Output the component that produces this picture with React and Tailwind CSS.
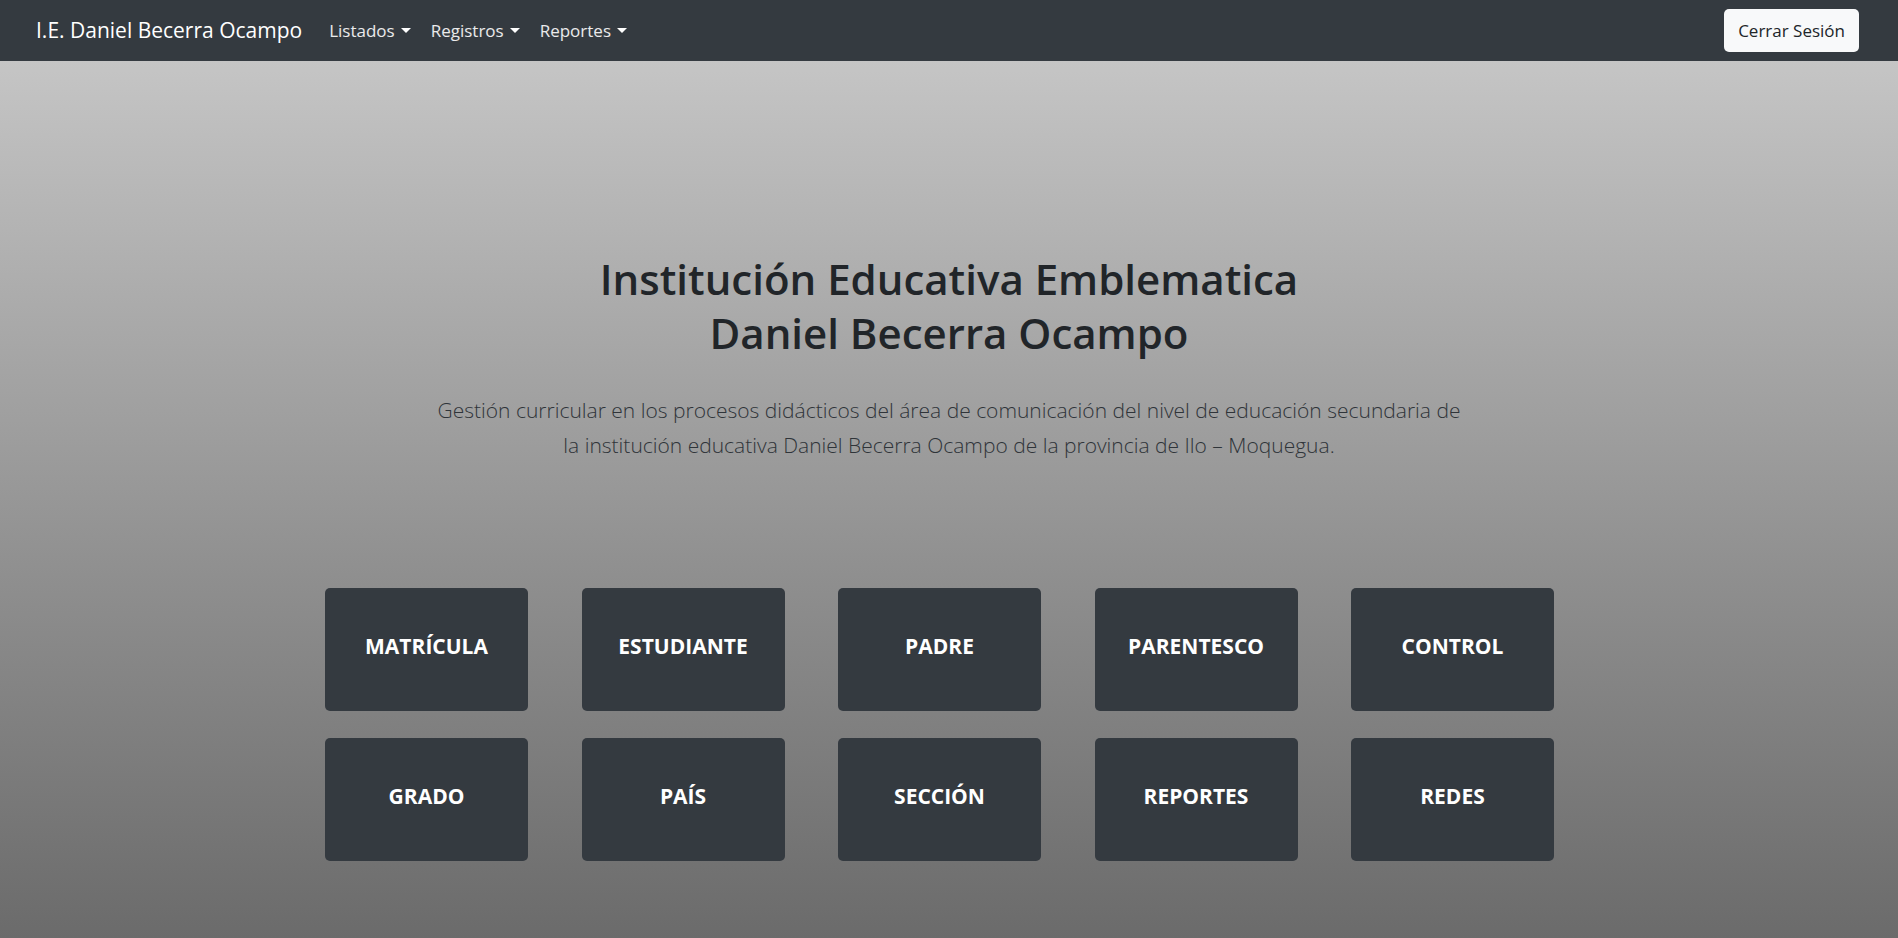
import React from 'react';

const menus = ['Listados', 'Registros', 'Reportes'];

const cards = [
  'MATRÍCULA',
  'ESTUDIANTE',
  'PADRE',
  'PARENTESCO',
  'CONTROL',
  'GRADO',
  'PAÍS',
  'SECCIÓN',
  'REPORTES',
  'REDES',
];

function Caret() {
  return (
    <span className="ml-[6px] inline-block h-0 w-0 border-x-[5px] border-t-[5px] border-x-transparent border-t-white align-middle" />
  );
}

export default function App() {
  return (
    <div className="min-h-screen flex flex-col font-['Open_Sans',sans-serif]">
      <nav className="h-[61px] bg-[#343a40] flex items-center justify-between pl-[36px] pr-[39px]">
        <div className="flex items-center">
          <a href="#" className="text-white text-[21px] mr-[17px]">
            I.E. Daniel Becerra Ocampo
          </a>
          {menus.map((m) => (
            <button key={m} className="text-white/90 text-[17px] px-[10px] flex items-center">
              {m}
              <Caret />
            </button>
          ))}
        </div>
        <button className="h-[43px] px-[14px] bg-[#f8f9fa] text-[#212529] text-[17px] rounded-[5px]">
          Cerrar Sesión
        </button>
      </nav>

      <main className="flex-1 bg-gradient-to-b from-[#c5c5c5] to-[#6b6b6b] pt-[191px] pb-[73px]">
        <h1 className="text-center text-[#212529] text-[42px] leading-[54px] font-semibold">
          Institución Educativa Emblematica
          <br />
          Daniel Becerra Ocampo
        </h1>
        <p className="mx-auto mt-[33px] max-w-[1100px] text-center text-[#2f3439] text-[21px] leading-[35px] font-light">
          Gestión curricular en los procesos didácticos del área de comunicación del nivel de educación secundaria de
          <br />
          la institución educativa Daniel Becerra Ocampo de la provincia de Ilo – Moquegua.
        </p>

        <div className="mt-[125px] flex justify-center pr-[19px]">
          <div className="grid grid-cols-[repeat(5,203px)] gap-x-[53.5px] gap-y-[27px]">
            {cards.map((c) => (
              <div key={c} className="h-[123px] rounded-[5px] bg-[#343a40] pt-[44px] text-center">
                <h4 className="text-white text-[21px] leading-[29px] font-bold">{c}</h4>
              </div>
            ))}
          </div>
        </div>
      </main>
    </div>
  );
}
